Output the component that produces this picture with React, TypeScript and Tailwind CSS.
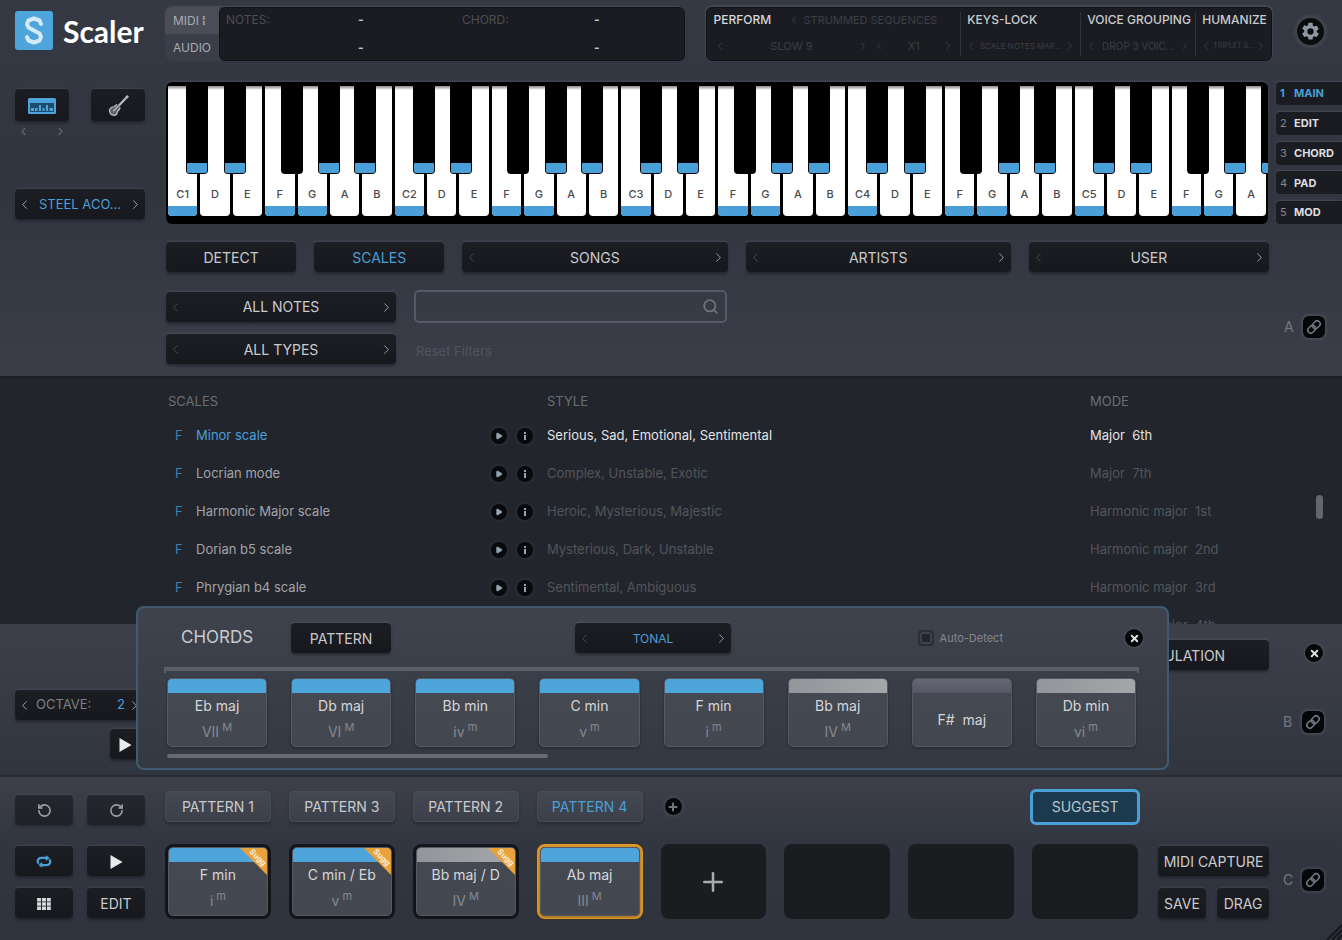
import type { ReactNode } from "react";
import { ChevronLeft, ChevronRight, Play, Plus, RotateCcw, RotateCw, Search, X } from "lucide-react";
import clsx from "clsx";

const KEY_SURFACE =
  "rounded bg-linear-to-b from-[#1c1e24] to-[#16181d] shadow-[0_-1px_2px_rgba(255,255,255,0.09),0_2px_3px_rgba(0,0,0,0.35)]";

interface ButtonProps {
  children: ReactNode;
  className?: string;
  label?: string;
}

function DarkButton({ children, className, label }: ButtonProps) {
  return (
    <button
      type="button"
      aria-label={label}
      className={clsx(KEY_SURFACE, "flex h-[30px] items-center justify-center pt-px text-sm", className)}
    >
      {children}
    </button>
  );
}

interface StepperProps {
  children: ReactNode;
  className?: string;
  textClassName?: string;
  prevClassName?: string;
}

function Stepper({ children, className, textClassName = "text-sm", prevClassName = "text-[#4a4e56]" }: StepperProps) {
  return (
    <div className={clsx(KEY_SURFACE, "flex h-[30px] items-center pt-px", className)}>
      <button type="button" aria-label="Previous" className={clsx("pl-0.5", prevClassName)}>
        <ChevronLeft size={15} strokeWidth={1.5} />
      </button>
      <button type="button" className={clsx("min-w-0 flex-1 truncate text-center", textClassName)}>
        {children}
      </button>
      <button type="button" aria-label="Next" className="pr-0.5 text-[#a5a8ad]">
        <ChevronRight size={15} strokeWidth={1.5} />
      </button>
    </div>
  );
}

function Logo() {
  return (
    <a href="#home" className="flex w-[165px] items-center gap-2.5 pt-1 pl-[15px]">
      <svg width="38" height="39" viewBox="0 0 38 39" aria-hidden="true">
        <rect width="38" height="39" rx="3" fill="#4da5dc" />
        <path
          d="M26 13 L24.500 9.500 L19 7.500 L13.500 9.500 L12 13 L13.500 16.500 L24.500 22.500 L26 26 L24.500 29.500 L19 31.500 L13.500 29.500 L12 26"
          fill="none"
          stroke="#d6eaf8"
          strokeWidth="4"
          strokeLinejoin="round"
          strokeLinecap="round"
        />
      </svg>
      <span className="font-['Lato',sans-serif] text-[30px] leading-9 font-bold text-white">Scaler</span>
    </a>
  );
}

function NotesPanel() {
  return (
    <div className="flex h-[54px] min-w-0 flex-[521] rounded-lg bg-[#3a3e48] shadow-[0_-1px_1px_rgba(255,255,255,0.1)]">
      <div className="flex w-[54px] shrink-0 flex-col text-left text-xs text-[#a9abb0]">
        <button type="button" className="flex-1 rounded-tl-lg bg-[#4a4d57] pl-2 text-left">
          MIDI<span className="font-bold"> ⁞</span>
        </button>
        <button type="button" className="flex-1 pl-2 text-left">
          AUDIO
        </button>
      </div>
      <dl className="grid flex-1 grid-cols-[236px_1fr] rounded-md border border-[#101216] bg-[#1a1c21] px-1.5 text-xs text-[#4b4e54]">
        {["NOTES:", "CHORD:"].map((title) => (
          <div key={title} className="flex">
            <dt className="w-[132px] leading-6">{title}</dt>
            <dd className="flex flex-col justify-between py-0.5 leading-5 font-bold text-[#c3c5c9]">
              <span>-</span>
              <span>-</span>
            </dd>
          </div>
        ))}
      </dl>
    </div>
  );
}

interface PerformCellProps {
  title: string;
  value: string;
  className: string;
  valueClassName: string;
}

function PerformCell({ title, value, className, valueClassName }: PerformCellProps) {
  return (
    <div className={clsx("my-1 flex min-w-0 flex-col justify-between border-l border-[#30333a]", className)}>
      <span className="pl-1.5 text-xs leading-4 font-medium whitespace-nowrap text-[#c9cbce]">{title}</span>
      <div className="flex h-5 items-center justify-between px-1 text-[#3c3f45]">
        <ChevronLeft size={12} />
        <span className={valueClassName}>{value}</span>
        <ChevronRight size={12} />
      </div>
    </div>
  );
}

function PerformPanel() {
  return (
    <div className="flex h-[54px] min-w-0 flex-[566] rounded-md border border-[#101216] bg-[#1a1c21] text-[11px] text-[#3c3f45] shadow-[0_-1px_1px_1px_rgba(255,255,255,0.08)]">
      <div className="my-1 flex flex-[251] flex-col justify-between pl-[7px]">
        <div className="flex h-4 items-center">
          <span className="w-[74px] text-xs font-medium text-[#d5d7da]">PERFORM</span>
          <ChevronLeft size={12} />
          <span className="pl-1 whitespace-nowrap">STRUMMED SEQUENCES</span>
        </div>
        <div className="flex h-5 items-center pr-1.5">
          <ChevronLeft size={12} />
          <span className="flex-1 text-center">SLOW 9</span>
          <ChevronRight size={12} />
          <ChevronLeft size={12} className="ml-1" />
          <span className="w-[57px] text-center">X1</span>
          <ChevronRight size={12} />
        </div>
      </div>
      <PerformCell title="KEYS-LOCK" value="SCALE NOTES MAP..." className="flex-[121]" valueClassName="text-[8px]" />
      <PerformCell title="VOICE GROUPING" value="DROP 3 VOIC..." className="flex-[116]" valueClassName="text-[10px]" />
      <PerformCell title="HUMANIZE" value="TRIPLET S..." className="flex-[76]" valueClassName="text-[7px]" />
    </div>
  );
}

function GearIcon() {
  return (
    <svg width="21" height="21" viewBox="0 0 24 24" fill="currentColor" aria-hidden="true">
      <path d="M19.140 12.940c.040-.300.060-.610.060-.940s-.020-.640-.070-.940l2.030-1.580a.49.49 0 0 0 .12-.61l-1.920-3.320a.49.49 0 0 0-.59-.22l-2.390.96a7 7 0 0 0-1.620-.94l-.36-2.540A.48.48 0 0 0 13.920 2h-3.840a.48.48 0 0 0-.47.410l-.36 2.540a7.300 7.300 0 0 0-1.620.940l-2.390-.96a.48.48 0 0 0-.59.220L2.740 8.470a.47.47 0 0 0 .12.610l2.030 1.580a6 6 0 0 0 0 1.880l-2.030 1.580a.49.49 0 0 0-.12.610l1.920 3.320c.12.220.37.290.59.220l2.390-.96c.5.380 1.030.700 1.620.940l.36 2.540c.05.240.24.410.48.410h3.840c.24 0 .44-.17.470-.41l.36-2.540a7 7 0 0 0 1.620-.94l2.390.96c.22.080.47 0 .59-.22l1.920-3.320a.47.47 0 0 0-.12-.61zM12 15.600A3.600 3.600 0 1 1 12 8.400a3.600 3.600 0 0 1 0 7.200" />
    </svg>
  );
}

function PianoIcon() {
  return (
    <svg width="28" height="16" viewBox="0 0 28 16" aria-hidden="true">
      <rect width="28" height="16" rx="1.500" fill="#4da5dc" />
      <rect x="2" y="5" width="24" height="9" fill="#1d4c6c" />
      <path d="M3 10h3v3H3zM7 10h2.500v3H7zM11 7h2v6h-2zM14.500 10h2v3h-2zM18 7h2v6h-2zM21.500 10h3.500v3h-3.500z" fill="#4da5dc" />
    </svg>
  );
}

function GuitarIcon() {
  return (
    <svg width="23" height="23" viewBox="0 0 26 26" fill="none" stroke="#b9bbbe" aria-hidden="true">
      <path d="M13 13.500 L21.500 4.500" strokeWidth="2.500" />
      <path d="M20.500 3.500 L23 1.500 L24.500 3 L22.500 5.500 Z" fill="#b9bbbe" strokeWidth="0.500" />
      <path
        d="M11.500 12 Q9.500 12.500 8.500 14 Q7.500 15 5.500 15 Q2 17 3 20.500 Q4.500 24.500 8.500 24 Q11.500 23.500 11.500 20.500 Q12 19 13.500 18 Q15 16.500 14.500 15"
        fill="#5d6066"
        strokeWidth="1.500"
      />
      <path d="M7 19.500 L13 13.500" strokeWidth="1.500" />
    </svg>
  );
}

const WHITE_KEYS = Array.from({ length: 34 }, (_, index) => {
  const note = "CDEFGAB"[index % 7];
  return { note, octave: Math.floor(index / 7) + 1 };
});

const LIT_KEYS = ["C", "F", "G"];

// sharps sit slightly off the seam between two white keys
const SHARP_OFFSET: Record<string, string> = {
  C: "-right-[11px]",
  D: "-right-[16px]",
  F: "-right-[8px]",
  G: "-right-[13px]",
  A: "-right-[17px]",
};

function Keyboard() {
  return (
    <div className="flex h-[142px] min-w-0 flex-1 gap-[3px] overflow-hidden rounded-md bg-black px-0.5 pt-1 pb-2 shadow-[0_-1px_2px_rgba(255,255,255,0.1)]">
      {WHITE_KEYS.map(({ note, octave }) => (
        <div key={note + octave} className="relative min-w-0 flex-1">
          <button
            type="button"
            className="flex h-full w-full flex-col justify-end overflow-hidden rounded-b-sm bg-linear-to-b from-[#8a8a8a] to-white to-[4px] text-[11px] font-medium text-[#4a4a4c]"
          >
            <span className="w-full pb-1 text-center">{note === "C" ? `C${octave}` : note}</span>
            <span className={clsx("h-2.5 w-full", LIT_KEYS.includes(note) && "bg-[#4a9fd8]")} />
          </button>
          {SHARP_OFFSET[note] && (
            <button
              type="button"
              aria-label={`${note} sharp ${octave}`}
              className={clsx(
                "absolute top-0 z-10 flex h-[88px] w-[22px] items-end rounded-b bg-black p-px",
                SHARP_OFFSET[note],
              )}
            >
              <span className={clsx("h-2.5 w-full rounded-b-xs", note !== "F" && "bg-[#4a9fd8]")} />
            </button>
          )}
        </div>
      ))}
    </div>
  );
}

const VIEWS = ["MAIN", "EDIT", "CHORD", "PAD", "MOD"];

function ViewTabs() {
  return (
    <nav className="flex w-[66px] shrink-0 flex-col justify-between">
      {VIEWS.map((view, index) => (
        <button
          key={view}
          type="button"
          className={clsx(
            "flex h-[23px] items-center rounded-l bg-[#1a1c21] pl-1 text-[11px] font-bold shadow-[0_-1px_2px_rgba(255,255,255,0.1)]",
            index === 0 ? "text-[#4a9fd8]" : "text-[#dddee0]",
          )}
        >
          <span className={clsx("w-[14px] text-left", index > 0 && "font-normal text-[#85878c]")}>{index + 1}</span>
          {view}
        </button>
      ))}
    </nav>
  );
}

function ChainIcon() {
  return (
    <svg width="18" height="18" viewBox="0 0 18 18" fill="none" stroke="currentColor" strokeWidth="1.500" aria-hidden="true">
      <g transform="rotate(-45 9 9)">
        <rect x="1.500" y="6" width="8.500" height="6" rx="3" />
        <rect x="8" y="6" width="8.500" height="6" rx="3" />
      </g>
    </svg>
  );
}

function LinkBadge({ name }: { name: string }) {
  return (
    <div className="flex items-center gap-2 text-sm text-[#767981]">
      <span className="w-[11px]">{name}</span>
      <button
        type="button"
        aria-label={`Link ${name}`}
        className="flex size-[22px] items-center justify-center rounded-md bg-[#050607] text-[#6f7983] shadow-[0_0_2px_2px_rgba(255,255,255,0.08)]"
      >
        <ChainIcon />
      </button>
    </div>
  );
}

function CloseButton({ label }: { label: string }) {
  return (
    <button
      type="button"
      aria-label={label}
      className="flex size-[18px] items-center justify-center rounded-full bg-[#050607] text-[#e4e5e6] shadow-[0_0_2px_1px_rgba(255,255,255,0.1)]"
    >
      <X size={11} strokeWidth={4} />
    </button>
  );
}

function TopSection() {
  return (
    <section className="bg-linear-to-b from-[#343943] via-[#303540] to-[#3b3e49] pb-3">
      <header className="flex items-start pt-[7px]">
        <Logo />
        <div className="flex min-w-0 flex-1 gap-[21px]">
          <NotesPanel />
          <PerformPanel />
        </div>
        <div className="flex w-[70px] justify-end pt-[11px] pr-[18px]">
          <button
            type="button"
            aria-label="Settings"
            className="flex size-[27px] items-center justify-center rounded-full bg-[#0b0c0e] text-[#8e98a5] shadow-[0_0_3px_3px_rgba(255,255,255,0.07)]"
          >
            <GearIcon />
          </button>
        </div>
      </header>

      <div className="mt-[21px] flex">
        <div className="flex w-[166px] shrink-0 flex-col pt-[7px] pr-[21px] pl-[15px]">
          <div className="flex justify-between">
            <DarkButton label="Keys" className="h-[32px] w-[54px]">
              <PianoIcon />
            </DarkButton>
            <DarkButton label="Guitar" className="h-[32px] w-[54px]">
              <GuitarIcon />
            </DarkButton>
          </div>
          <div className="mt-1 flex w-[54px] justify-between px-0.5 text-[#62666f]">
            <ChevronLeft size={13} />
            <ChevronRight size={13} />
          </div>
          <Stepper className="mt-[51px] text-[#4a9fd8]" textClassName="text-[13px]" prevClassName="text-[#a5a8ad]">
            STEEL ACO...
          </Stepper>
        </div>
        <Keyboard />
        <div className="w-2 shrink-0" />
        <ViewTabs />
      </div>

      <div className="mt-[18px] mr-[73px] ml-[166px] flex gap-[18px] text-[#c9cbce]">
        <DarkButton className="flex-[130]">DETECT</DarkButton>
        <DarkButton className="flex-[130] text-[#4a9fd8]">SCALES</DarkButton>
        <Stepper className="flex-[265]">SONGS</Stepper>
        <Stepper className="flex-[265]">ARTISTS</Stepper>
        <Stepper className="flex-[240]">USER</Stepper>
      </div>

      <div className="mt-[18px] flex items-center justify-between pr-[17px] pl-[166px]">
        <div className="grid grid-cols-[230px_313px] gap-x-[18px] gap-y-[11px] text-[#c9cbce]">
          <Stepper className="self-center">ALL NOTES</Stepper>
          <label className="flex h-[33px] items-center rounded-[5px] border-2 border-[#575a66] pr-1.5">
            <input type="search" aria-label="Search scales" className="min-w-0 flex-1 bg-transparent px-2 text-[13px] outline-none" />
            <Search size={17} strokeWidth={2.5} className="text-[#6f737d]" />
          </label>
          <Stepper>ALL TYPES</Stepper>
          <button type="button" className="mt-1.5 self-center justify-self-start pl-0.5 text-[13px] text-[#50545e]">
            Reset Filters
          </button>
        </div>
        <LinkBadge name="A" />
      </div>
    </section>
  );
}

interface Scale {
  name?: string;
  style?: string;
  mode: string;
}

const SCALES: Scale[] = [
  { name: "Minor scale", style: "Serious, Sad, Emotional, Sentimental", mode: "Major  6th" },
  { name: "Locrian mode", style: "Complex, Unstable, Exotic", mode: "Major  7th" },
  { name: "Harmonic Major scale", style: "Heroic, Mysterious, Majestic", mode: "Harmonic major  1st" },
  { name: "Dorian b5 scale", style: "Mysterious, Dark, Unstable", mode: "Harmonic major  2nd" },
  { name: "Phrygian b4 scale", style: "Sentimental, Ambiguous", mode: "Harmonic major  3rd" },
  { mode: "Harmonic major  4th" },
];

function RoundIconButton({ label, children }: { label: string; children: ReactNode }) {
  return (
    <button
      type="button"
      aria-label={label}
      className="flex size-4 items-center justify-center rounded-full bg-[#090a0c] text-[#94a5b1] shadow-[0_0_3px_2px_rgba(255,255,255,0.04)]"
    >
      {children}
    </button>
  );
}

function ScaleList() {
  return (
    <section className="flex h-[248px] overflow-hidden border-t-2 border-[#1d1f24] bg-[#22252c] pl-[166px]">
      <table className="h-0 flex-1 table-fixed text-left text-[13px]">
        <thead>
          <tr className="h-[38px] text-[#6b6e73]">
            <th className="w-[325px] pt-2.5 pl-0.5 font-normal">SCALES</th>
            <th className="w-[56px]" aria-label="Actions" />
            <th className="pt-2.5 font-normal">STYLE</th>
            <th className="w-[226px] pt-2.5 font-normal">MODE</th>
          </tr>
        </thead>
        <tbody>
          {SCALES.map(({ name, style, mode }, index) => {
            const active = index === 0;
            return (
              <tr key={mode} className="h-[38px] border-b border-[#202329]">
                <td className={clsx("pt-0.5", active ? "text-[#4a9fd8]" : "text-[#a2a4a8]")}>
                  {name && <span className="inline-block w-[30px] pl-[9px] text-[#3d81ae]">F</span>}
                  {name}
                </td>
                <td className="pt-0.5">
                  {name && (
                    <div className="flex gap-[10px]">
                      <RoundIconButton label={`Play ${name}`}>
                        <Play size={8} fill="currentColor" />
                      </RoundIconButton>
                      <RoundIconButton label={`About ${name}`}>
                        <svg width="4" height="10" viewBox="0 0 4 10" fill="currentColor" aria-hidden="true">
                          <path d="M1 1h2v2H1zM1 4h2v5H1z" />
                        </svg>
                      </RoundIconButton>
                    </div>
                  )}
                </td>
                <td className={clsx("pt-0.5", active ? "text-[#e2e3e5]" : "text-[#52555b]")}>{style}</td>
                <td className={clsx("pt-0.5 whitespace-pre", active ? "text-[#e2e3e5]" : "text-[#52555b]")}>{mode}</td>
              </tr>
            );
          })}
        </tbody>
      </table>
      <div className="w-[26px] pt-[117px]">
        <div className="h-[24px] w-[7px] rounded-sm bg-[#63666c]" />
      </div>
    </section>
  );
}

type Tone = "blue" | "grey" | "dim";

interface Chord {
  name: string;
  degree?: string;
  quality?: string;
  tone: Tone;
}

const TONE_BAR: Record<Tone, string> = {
  blue: "bg-[#4da5dc]",
  grey: "bg-linear-to-r from-[#94959a] to-[#a5a6aa]",
  dim: "bg-linear-to-b from-[#646773] to-[#565965]",
};

const CHORDS: Chord[] = [
  { name: "Eb maj", degree: "VII", quality: "M", tone: "blue" },
  { name: "Db maj", degree: "VI", quality: "M", tone: "blue" },
  { name: "Bb min", degree: "iv", quality: "m", tone: "blue" },
  { name: "C min", degree: "v", quality: "m", tone: "blue" },
  { name: "F min", degree: "i", quality: "m", tone: "blue" },
  { name: "Bb maj", degree: "IV", quality: "M", tone: "grey" },
  { name: "F#  maj", tone: "dim" },
  { name: "Db min", degree: "vi", quality: "m", tone: "grey" },
];

function ChordCard({ chord, children }: { chord: Chord; children?: ReactNode }) {
  return (
    <button
      type="button"
      className="relative flex h-[69px] w-full flex-col overflow-hidden rounded-[5px] border border-[#555963] bg-linear-to-b from-[#454951] to-[#434750] shadow-[0_1px_3px_rgba(0,0,0,0.35)]"
    >
      <span className={clsx("h-[14px] w-full shrink-0", TONE_BAR[chord.tone])} />
      <span className="flex w-full flex-1 flex-col items-center justify-center gap-1 text-sm leading-5 whitespace-pre text-[#d6d7da]">
        {chord.name}
        {chord.degree && (
          <span className="leading-6 text-[#868990]">
            {chord.degree}
            <sup className="text-[11px]"> {chord.quality}</sup>
          </span>
        )}
      </span>
      {children}
    </button>
  );
}

function ChordsDialog() {
  return (
    <div
      role="dialog"
      aria-label="Chords"
      className="absolute -top-[18px] right-[173px] left-[136px] z-20 h-[164px] rounded-lg border-2 border-[#3f5b72] bg-linear-to-b from-[#3f434d] to-[#343841] pt-[15px] pr-[28px] pl-[26px]"
    >
      <div className="flex h-[30px] items-center pl-[17px] text-[#c9cbce]">
        <h2 className="w-[110px] text-[17px]">CHORDS</h2>
        <DarkButton className="w-[100px]">PATTERN</DarkButton>
        <Stepper className="ml-[184px] w-[156px] text-[#4a9fd8]" textClassName="text-xs">
          TONAL
        </Stepper>
        <label className="ml-auto flex items-center gap-1.5 text-[11px] text-[#858890]">
          <input
            type="checkbox"
            className="size-4 appearance-none rounded border-2 border-[#2b2e35] bg-[#22252b] shadow-[inset_0_0_0_2px_#3d414a]"
          />
          Auto-Detect
        </label>
        <div className="-mr-1 ml-[122px]">
          <CloseButton label="Close chords" />
        </div>
      </div>
      <div className="mt-3.5 h-1.5 border-x-2 border-t-4 border-[#5a5e67]" />
      <div className="mt-[5px] grid grid-cols-8 gap-6 px-[3px]">
        {CHORDS.map((chord) => (
          <ChordCard key={chord.name + chord.degree} chord={chord} />
        ))}
      </div>
      <div className="mt-[7px] ml-[3px] h-1 w-[381px] rounded-full bg-[#686b73]" />
    </div>
  );
}

function ChordSection() {
  return (
    <section className="relative flex h-[151px] bg-linear-to-b from-[#3d404b] to-[#31353f]">
      <div className="flex w-[145px] flex-col items-end gap-[9px] pt-[66px] pl-[15px] text-[13px]">
        <div className={clsx(KEY_SURFACE, "flex h-[30px] w-full items-center pr-[3px] text-[#a5a8ad]")}>
          <button type="button" aria-label="Octave down" className="pl-0.5">
            <ChevronLeft size={15} strokeWidth={1.5} />
          </button>
          <span className="flex-1 pl-1 text-[#7d8086]">OCTAVE:</span>
          <span className="text-[#4a9fd8]">2</span>
          <button type="button" aria-label="Octave up" className="pl-0.5">
            <ChevronRight size={15} strokeWidth={1.5} />
          </button>
        </div>
        <DarkButton label="Play chord" className="w-[35px] pr-1 text-white">
          <PlayGlyph />
        </DarkButton>
      </div>
      <div className="ml-auto pt-4">
        <DarkButton className="w-[182px] text-[#c9cbce]">MODULATION</DarkButton>
      </div>
      <div className="ml-[14px] flex w-[59px] flex-col items-start pt-5">
        <div className="ml-[22px]">
          <CloseButton label="Close modulation" />
        </div>
        <div className="mt-[49px]">
          <LinkBadge name="B" />
        </div>
      </div>
      <ChordsDialog />
    </section>
  );
}

function PlayGlyph() {
  return (
    <svg width="13" height="14" viewBox="0 0 13 14" fill="#e8e9ea" aria-hidden="true">
      <path d="M0.500 0 L12.500 7 L0.500 14 Z" />
    </svg>
  );
}

function LoopGlyph() {
  return (
    <svg width="16" height="13" viewBox="0 0 18 14" fill="none" stroke="#4a9fd8" strokeWidth="2.500" aria-hidden="true">
      <path d="M3 9.500 C0.500 6 3 3 6 3 H12" />
      <path d="M15 4.500 C17.500 8 15 11 12 11 H6" />
      <path d="M11 0 L15.500 3 L11 6.500 Z" fill="#4a9fd8" stroke="none" />
      <path d="M7 7.500 L2.500 11 L7 14 Z" fill="#4a9fd8" stroke="none" />
    </svg>
  );
}

function GridGlyph() {
  return (
    <svg width="14" height="12" viewBox="0 0 15 13" fill="#d8d9db" aria-hidden="true">
      <path d="M0 0h4.300v3.700H0zM5.300 0h4.300v3.700H5.300zM10.600 0h4.300v3.700h-4.300zM0 4.700h4.300v3.700H0zM5.300 4.700h4.300v3.700H5.300zM10.600 4.700h4.300v3.700h-4.300zM0 9.300h4.300V13H0zM5.300 9.300h4.300V13H5.300zM10.600 9.300h4.300V13h-4.300z" />
    </svg>
  );
}

function SuggestedRibbon() {
  return (
    <svg width="27" height="27" viewBox="0 0 27 27" className="absolute top-0 right-0" aria-hidden="true">
      <path d="M0 0 H27 V27 Z" fill="#e9a13b" />
      <text
        x="18"
        y="12"
        transform="rotate(45 18 9)"
        textAnchor="middle"
        fontSize="8"
        fontWeight="700"
        fill="#fbeedb"
        fontFamily="Inter, sans-serif"
      >
        Sugg
      </text>
    </svg>
  );
}

const PATTERNS = ["PATTERN 1", "PATTERN 3", "PATTERN 2", "PATTERN 4"];

const SLOTS: Chord[] = [
  { name: "F min", degree: "i", quality: "m", tone: "blue" },
  { name: "C min / Eb", degree: "v", quality: "m", tone: "blue" },
  { name: "Bb maj / D", degree: "IV", quality: "M", tone: "grey" },
  { name: "Ab maj", degree: "III", quality: "M", tone: "blue" },
];

function PatternSection() {
  return (
    <section className="relative flex flex-1 border-t-2 border-[#272a31] bg-linear-to-b from-[#3d404b] via-[#323640] via-40% to-[#2f333d]">
      <div className="grid w-[145px] shrink-0 grid-cols-2 content-start gap-x-3.5 pt-[18px] pl-[15px] text-[#c9cbce]">
        <DarkButton label="Undo" className="mb-[21px] opacity-70">
          <RotateCcw size={15} strokeWidth={2.5} />
        </DarkButton>
        <DarkButton label="Redo" className="mb-[21px] opacity-70">
          <RotateCw size={15} strokeWidth={2.5} />
        </DarkButton>
        <DarkButton label="Loop" className="mb-3">
          <LoopGlyph />
        </DarkButton>
        <DarkButton label="Play pattern" className="mb-3">
          <PlayGlyph />
        </DarkButton>
        <DarkButton label="Grid view">
          <GridGlyph />
        </DarkButton>
        <DarkButton>EDIT</DarkButton>
      </div>

      <div className="ml-5 flex-1">
        <div className="grid h-[59px] grid-cols-8 items-center gap-[18px] text-sm">
          {PATTERNS.map((pattern, index) => (
            <button
              key={pattern}
              type="button"
              className={clsx(
                "h-[31px] rounded border border-[#484c56] bg-linear-to-b from-[#434852] to-[#3b404a] shadow-[0_2px_3px_rgba(0,0,0,0.25)]",
                index === 3 ? "text-[#4a9fd8]" : "text-[#c9cbce]",
              )}
            >
              {pattern}
            </button>
          ))}
          <button
            type="button"
            aria-label="Add pattern"
            className="ml-1 flex size-[17px] items-center justify-center rounded-full bg-[#050607] text-[#6f7881] shadow-[0_0_2px_2px_rgba(255,255,255,0.06)]"
          >
            <Plus size={12} strokeWidth={4} />
          </button>
          <button
            type="button"
            className="col-start-8 -mx-0.5 h-[36px] rounded-md border-[3px] border-[#4a9fd8] bg-[#1b3a4d] text-[#b9c6cf]"
          >
            SUGGEST
          </button>
        </div>
        <div className="mt-2 grid grid-cols-8 gap-[18px]">
          {SLOTS.map((chord, index) => (
            <div
              key={chord.name}
              className={clsx(
                "rounded-lg border-[3px]",
                index === 3 ? "border-[#dd992f] bg-[#1a1c21] ring-1 ring-[#3a3424]" : "border-[#15171b] bg-[#15171b]",
              )}
            >
              <ChordCard chord={chord}>{index < 3 && <SuggestedRibbon />}</ChordCard>
            </div>
          ))}
          <button
            type="button"
            aria-label="Add chord"
            className="flex items-center justify-center rounded-lg bg-[#1a1c20] text-[#a9abaf]"
          >
            <Plus size={30} strokeWidth={2} />
          </button>
          {["first", "second", "third"].map((slot) => (
            <div key={slot} className="rounded-lg bg-[#1a1c20]" />
          ))}
        </div>
      </div>

      <div className="ml-5 grid w-[111px] grid-cols-[48px_52px] content-start justify-between gap-y-3 pt-[69px] text-[#c9cbce]">
        <DarkButton className="col-span-2">MIDI CAPTURE</DarkButton>
        <DarkButton>SAVE</DarkButton>
        <DarkButton>DRAG</DarkButton>
      </div>
      <div className="ml-[14px] w-[59px] pt-[92px]">
        <LinkBadge name="C" />
      </div>
      <svg width="16" height="16" className="absolute right-0 bottom-0" stroke="#15171b" strokeWidth="2" aria-hidden="true">
        <path d="M1 16 L16 1 M6 16 L16 6 M11 16 L16 11" />
      </svg>
    </section>
  );
}

export default function App() {
  return (
    <main className="flex min-h-screen flex-col overflow-hidden bg-[#2f333d] font-['Inter',sans-serif]">
      <TopSection />
      <ScaleList />
      <ChordSection />
      <PatternSection />
    </main>
  );
}
